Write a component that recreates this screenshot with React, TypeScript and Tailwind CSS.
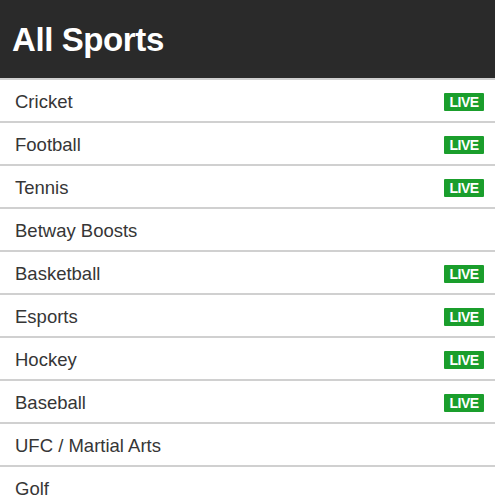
const sports = [
  { name: "Cricket", live: true },
  { name: "Football", live: true },
  { name: "Tennis", live: true },
  { name: "Betway Boosts", live: false },
  { name: "Basketball", live: true },
  { name: "Esports", live: true },
  { name: "Hockey", live: true },
  { name: "Baseball", live: true },
  { name: "UFC / Martial Arts", live: false },
  { name: "Golf", live: false },
];

export default function App() {
  return (
    <div className="w-[495px] h-[500px] overflow-hidden bg-white font-['Liberation_Sans',Arial,sans-serif]">
      <div className="h-[78px] bg-[#2a2a2a] flex items-center px-[12px]">
        <h1 className="text-white font-bold text-[33px] tracking-[-0.4px] leading-none">
          All Sports
        </h1>
      </div>
      <ul>
        {sports.map((s) => (
          <li
            key={s.name}
            className="h-[43px] border-t-2 border-[#d0d0d0] flex items-center justify-between pl-[15px] pr-[11px] pt-[2px]"
          >
            <span className="text-[18.5px] text-[#363636]">{s.name}</span>
            {s.live && (
              <span className="w-[40px] h-[18px] flex items-center justify-center bg-[#1a9e2c] text-white font-bold text-[14px] tracking-[-0.5px] leading-none rounded-[1px]">
                LIVE
              </span>
            )}
          </li>
        ))}
      </ul>
    </div>
  );
}
